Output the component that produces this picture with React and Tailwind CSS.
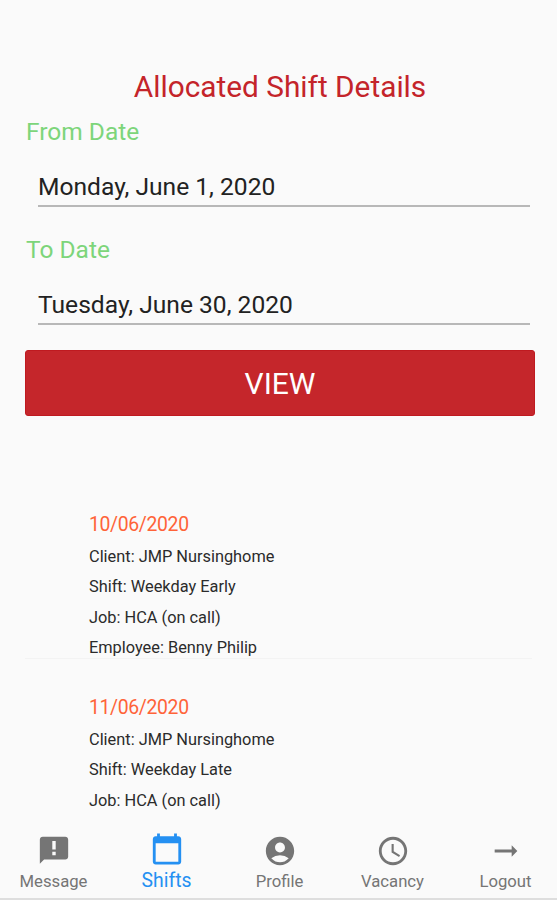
import React from "react";
import {
  MdCalendarToday,
  MdAccountCircle,
  MdAccessTime,
  MdArrowRightAlt,
} from "react-icons/md";

const shifts = [
  {
    date: "10/06/2020",
    lines: [
      "Client: JMP Nursinghome",
      "Shift: Weekday Early",
      "Job: HCA (on call)",
      "Employee: Benny Philip",
    ],
  },
  {
    date: "11/06/2020",
    lines: [
      "Client: JMP Nursinghome",
      "Shift: Weekday Late",
      "Job: HCA (on call)",
    ],
  },
];

const MessageIcon = ({ className }) => (
  <svg viewBox="0 0 24 24" fill="currentColor" className={className}>
    <path
      fillRule="evenodd"
      d="M20 2H4c-1.1 0-2 .9-2 2v17l3-3h15c1.1 0 2-.9 2-2V4c0-1.1-.9-2-2-2zM13.2 11h-2.4V5h2.4zM13.2 15h-2.4v-2.4h2.4z"
    />
  </svg>
);

const tabs = [
  { label: "Message", icon: MessageIcon },
  { label: "Shifts", icon: MdCalendarToday, active: true },
  { label: "Profile", icon: MdAccountCircle },
  { label: "Vacancy", icon: MdAccessTime },
  { label: "Logout", icon: MdArrowRightAlt },
];

const DateField = ({ label, value }) => (
  <div className="h-[118px]">
    <div className="h-[30px] pl-px text-[24.5px] leading-[30px] text-[#7dd57a]">{label}</div>
    <div className="mt-[21px] ml-[13px] mr-0.5 h-[39px] border-b-2 border-[#b8b8b8] text-[24.6px] leading-[37px] text-[#222]">
      {value}
    </div>
  </div>
);

const ShiftItem = ({ date, lines }) => (
  <div className="h-[183px] shrink-0 border-b border-[#f3f3f3] pl-16 pt-[32px]">
    <div className="h-[33.6px] text-[19.4px] leading-[33px] tracking-[-0.35px] text-[#ff6338]">{date}</div>
    {lines.map((line) => (
      <div key={line} className="h-[30.6px] text-[16.35px] leading-[30.6px] text-[#2b2b2b]">
        {line}
      </div>
    ))}
  </div>
);

const TabItem = ({ label, icon: Icon, active }) => (
  <div
    className={
      active
        ? "flex flex-1 flex-col items-center pt-[17px] text-[#2490f2]"
        : "flex flex-1 flex-col items-center pt-[19px] text-[#757575]"
    }
  >
    <Icon className="size-[34px] shrink-0" />
    <span className={active ? "text-[19.4px] leading-[30px]" : "text-[16.7px] leading-[28px]"}>
      {label}
    </span>
  </div>
);

const App = () => {
  return (
    <div className="flex h-[900px] w-[557px] flex-col overflow-hidden bg-[#fafafa] font-['Roboto',sans-serif]">
      <div className="shrink-0 px-[25px] pt-[67px]">
        <h1 className="h-10 pl-[3px] text-center text-[29.8px] leading-10 text-[#c4242a]">
          Allocated Shift Details
        </h1>
        <div className="pt-[10px]">
          <DateField label="From Date" value="Monday, June 1, 2020" />
          <DateField label="To Date" value="Tuesday, June 30, 2020" />
        </div>
        <button className="-mt-[3px] block h-[66px] w-[510px] rounded-[3px] border border-[#bf1a20] bg-[#c5262b] pt-px text-[30px] text-white">
          VIEW
        </button>
      </div>

      {/* Shift list */}
      <div className="mt-[60px] flex min-h-0 flex-1 flex-col overflow-hidden px-[25px]">
        {shifts.map((shift) => (
          <ShiftItem key={shift.date} {...shift} />
        ))}
      </div>

      {/* Bottom tabs */}
      <div className="-ml-[3px] -mr-[5px] flex h-[85px] shrink-0 border-b-2 border-[#dedede] bg-[#fafafa]">
        {tabs.map((tab) => (
          <TabItem key={tab.label} {...tab} />
        ))}
      </div>
    </div>
  );
};

export default App;
